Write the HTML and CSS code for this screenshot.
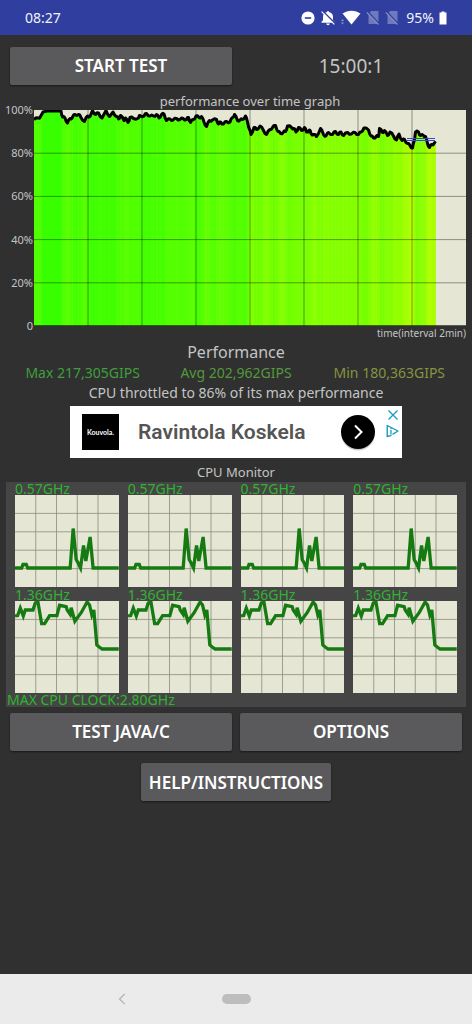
FILE: index.html
```html
<!DOCTYPE html>
<html lang="en">
<head>
<meta charset="utf-8">
<meta name="viewport" content="width=device-width, initial-scale=1">
<title>CPU Throttling Test</title>
<link rel="stylesheet" href="styles.css">
</head>
<body>
<header class="status">
  <span class="clock">08:27</span>
  <div class="status-icons">
    <svg width="14" height="14" viewBox="0 0 14 14"><circle cx="7" cy="7" r="6.6" fill="#fff"/><path d="M3.8 7h6.4" stroke="#303f9f" stroke-width="1.6"/></svg>
    <svg width="16" height="16" viewBox="0 0 16 16"><path d="M1.500 12.800V11.700l1.500-1.500V6.800C3 4.300 4.700 2.800 6.600 2.300 6.700.8 9.300.8 9.400 2.300 11.300 2.800 13 4.300 13 6.800v3.400l1.500 1.500v1.100zM6.300 13.500h3.400a1.700 1.700 0 0 1-3.400 0z" fill="#fff"/><path d="M2.700 1 15.300 13.600" stroke="#303f9f" stroke-width="1.500"/><path d="M1.600 1.700 14.300 14.400" stroke="#fff" stroke-width="1.200"/></svg>
    <svg width="20" height="15" viewBox="0 0 20 15"><path d="M1.500 3.600C6.500-.3 14.500-.3 19.500 3.600L10.500 14.500z" fill="#fff"/><path d="M0 11l1.500-2L3 11zM0 12.500l1.500 2 1.500-2z" fill="#8c95cb"/></svg>
    <svg width="14" height="15" viewBox="0 0 14 15"><path d="M5 1h7.500v13H2.500V4z" fill="#6f79bc"/><path d="M1.600 1.600 13.300 14" stroke="#303f9f" stroke-width="1.500"/><path d="M.8 2.300 12.400 14.500" stroke="#8790c8" stroke-width="1.100"/></svg>
    <svg width="14" height="15" viewBox="0 0 14 15"><path d="M5 1h7.500v13H2.500V4z" fill="#6f79bc"/><path d="M1.600 1.600 13.300 14" stroke="#303f9f" stroke-width="1.500"/><path d="M.8 2.300 12.400 14.500" stroke="#8790c8" stroke-width="1.100"/></svg>
    <span class="battery">95%</span>
    <svg width="8" height="14" viewBox="0 0 8 14"><path d="M2.500 1.500V.5h3v1H7.500v12H.5v-12z" fill="#fff"/></svg>
  </div>
</header>

<main class="app">
  <div class="row row-top">
    <button class="btn" type="button">START TEST</button>
    <div class="timer">15:00:1</div>
  </div>

  <section class="graph">
    <h2 class="graph-title">performance over time graph</h2>
    <div class="axis"><span>100%</span><span>80%</span><span>60%</span><span>40%</span><span>20%</span><span>0</span></div>
    <svg class="plot" id="perf" viewBox="0 0 432 216" preserveAspectRatio="none" role="img" aria-label="Performance over time"></svg>
    <p class="graph-x">time(interval 2min)</p>
  </section>

  <section class="summary">
    <h2 class="summary-title">Performance</h2>
    <div class="stats">
      <span class="max">Max 217,305GIPS</span>
      <span class="avg">Avg 202,962GIPS</span>
      <span class="min">Min 180,363GIPS</span>
    </div>
    <p class="note">CPU throttled to 86% of its max performance</p>
  </section>

  <aside class="ad">
    <a class="ad-link" href="#">
      <span class="ad-logo">Kouvola.</span>
      <span class="ad-text">Ravintola Koskela</span>
      <svg class="ad-go" width="36" height="38" viewBox="0 0 36 38"><circle cx="18" cy="20.500" r="17" fill="#ccc"/><circle cx="18" cy="19" r="17" fill="#000"/><path d="M15 12.500l6.500 6.500-6.500 6.500" fill="none" stroke="#fff" stroke-width="2"/></svg>
    </a>
    <div class="ad-tools">
      <button class="ad-btn" type="button" aria-label="Close ad"><svg width="12" height="12" viewBox="0 0 12 12"><path d="M1.500 1.500l9 9M10.500 1.500l-9 9" stroke="#1a9cc4" stroke-width="1.300"/></svg></button>
      <button class="ad-btn" type="button" aria-label="Ad choices"><svg width="13" height="14" viewBox="0 0 13 14"><path d="M5.500 11.300 1.200 12.500V1.500L12 7l-5.500 3.300" fill="none" stroke="#1a9cc4" stroke-width="1.400" stroke-linejoin="round"/><path d="M5 6v4.500M5 3.800v1.300" stroke="#1a9cc4" stroke-width="1.300"/></svg></button>
    </div>
  </aside>

  <section class="monitor">
    <h2 class="monitor-title">CPU Monitor</h2>
    <div class="panel">
      <div class="cores" id="cores"></div>
      <p class="max-clock">MAX CPU CLOCK:2.80GHz</p>
    </div>
  </section>

  <div class="row row-mid">
    <button class="btn" type="button">TEST JAVA/C</button>
    <button class="btn" type="button">OPTIONS</button>
  </div>
  <div class="row-help"><button class="btn btn-help" type="button">HELP/INSTRUCTIONS</button></div>
</main>

<nav class="navbar">
  <button class="nav-btn nav-back" type="button" aria-label="Back"><svg width="8" height="12" viewBox="0 0 8 12"><path d="M6.700 1 1.500 6l5.200 5" fill="none" stroke="#b5b5b5" stroke-width="1.300"/></svg></button>
  <button class="nav-btn nav-home" type="button" aria-label="Home"></button>
</nav>
<script src="charts.js"></script>
</body>
</html>
```

FILE: styles.css
```css
* { box-sizing: border-box; }
body {
  margin: 0;
  min-height: 100vh;
  display: flex;
  flex-direction: column;
  background: #303030;
  color: #c4c4c4;
  font-family: "Noto Sans", "Open Sans", sans-serif;
  font-size: 14px;
}
h2, p { margin: 0; font-weight: 400; }
button { font-family: inherit; border: 0; padding: 0; cursor: pointer; }
svg { display: block; }

.status {
  height: 35px;
  padding: 0 25px;
  display: flex;
  align-items: center;
  justify-content: space-between;
  background: #303f9f;
  color: #f2f3fa;
}
.clock { font-size: 14px; }
.status-icons { display: flex; align-items: center; gap: 5px; }
.battery { font-size: 14px; padding-left: 2px; }

.app { flex: 1; padding: 12px 6px 0; }
.row { display: grid; grid-template-columns: 1fr 1fr; gap: 8px; padding: 0 4px; align-items: center; }
.btn {
  height: 38px;
  border-radius: 2px;
  background: #5a5a5c;
  color: #fff;
  font-size: 17px;
  font-weight: 600;
  box-shadow: 0 1px 2px rgba(0, 0, 0, .5);
}
.row-top .btn, .row-mid .btn { padding-bottom: 1px; }
.timer { text-align: center; font-size: 19px; line-height: 26px; }

.graph {
  margin-top: 7px;
  display: grid;
  grid-template-columns: 28px 1fr;
}
.graph-title { grid-column: 2; text-align: center; font-size: 13px; line-height: 18px; }
.axis {
  margin: -6px 0;
  display: flex;
  flex-direction: column;
  justify-content: space-between;
  align-items: flex-end;
  padding-right: 1px;
  font-size: 11px;
  line-height: 12px;
}
.plot { width: 100%; height: 216px; background: #e6e6d4; }
.graph-x { grid-column: 2; text-align: right; font-size: 10px; line-height: 15px; }

.summary { text-align: center; }
.summary-title { font-size: 16px; line-height: 22px; }
.stats { display: grid; grid-template-columns: repeat(3, 1fr); line-height: 20px; }
.max { color: #3f9f3c; }
.avg { color: #55983c; }
.min { color: #849440; }
.note { line-height: 20px; }

.ad {
  width: 332px;
  max-width: 100%;
  height: 52px;
  margin: 3px auto 0;
  display: flex;
  background: #fff;
}
.ad-link {
  flex: 1;
  display: flex;
  align-items: center;
  padding-left: 12px;
  text-decoration: none;
}
.ad-logo {
  width: 37px;
  height: 36px;
  background: #000;
  color: #fff;
  font: 700 7px/36px Lato, sans-serif;
  text-align: center;
}
.ad-text {
  flex: 1;
  padding-left: 19px;
  color: #555;
  font: 600 21px/28px Roboto, sans-serif;
}
.ad-tools { width: 26px; padding: 3px 3px 0 0; display: flex; flex-direction: column; align-items: flex-end; gap: 3px; }
.ad-btn { background: none; }

.monitor-title { margin-top: 5px; text-align: center; font-size: 13px; line-height: 19px; }
.panel { background: #454545; color: #2fb42f; }
.cores { display: grid; grid-template-columns: repeat(4, 1fr); gap: 1px 9px; padding: 0 9px; }
.core-label { font-size: 14px; line-height: 14px; height: 13px; }
.core-plot { width: 100%; height: 92px; background: #e6e6d4; }
.max-clock { font-size: 14px; line-height: 14px; padding-left: 1px; }

.row-mid { margin-top: 6px; }
.row-help { margin-top: 12px; text-align: center; }
.btn-help { padding: 0 8px; }

.navbar {
  height: 50px;
  display: grid;
  grid-template-columns: 1fr 1fr 1fr 1fr;
  align-items: center;
  justify-items: center;
  background: #ebebeb;
}
.nav-btn { background: none; }
.nav-back { grid-column: 2; grid-row: 1; justify-self: start; }
.nav-home { grid-column: 2 / 4; grid-row: 1; width: 29px; height: 10px; border-radius: 5px; background: #bdbdbd; }
```

FILE: charts.js
```js
// Performance samples: x along the time axis, y as depth below 100%.
const perf = [
  [0,9.5],[4.5,8],[6.5,6.5],[9,2],[13,1],[27,1],[28.5,7],[31,8],[33.5,13],[36,8.5],[38.3,7.5],[41,4.5],[44.5,4.5],[47,7.5],
  [50.5,11.5],[53.5,6],[56,6.5],[58.5,.5],[61.5,4.5],[64.5,3],[68,8],[72,.5],[75.5,6.5],[79,2],[82.5,6.5],[84.5,9],[86.5,5.5],
  [90,10.5],[91.5,8],[94,12.5],[96,7.5],[99.5,8.5],[104.5,8],[106,5.5],[110,6],[112.5,3.5],[116,6],[119.5,6],[122.5,4.5],
  [125,8],[127.5,4.5],[130,4],[132.5,10.5],[136,9],[139,10],[142.5,8.5],[146,9.5],[149,8.5],[152.5,9.5],[154.5,7.5],[156.5,12.5],
  [159.5,9.5],[162,6],[165,7.5],[167.5,6.5],[170,12],[172.5,16.5],[175.5,10.5],[178.5,10],[182.5,9.5],[184.5,14],[186.5,12],
  [189.5,14],[192.5,11.5],[196,12],[198.5,7.5],[200.5,4.5],[203.5,10.5],[206,10],[208.5,9.5],[211.5,6],[213.5,12],[215.5,19.5],
  [217,24.5],[220,17.5],[222.5,19.5],[226,16],[229.5,20.5],[232.5,24.5],[236,19.5],[238.5,17.5],[241.5,15.5],[244,21.5],
  [246.5,23.5],[249.5,22],[251.5,21.5],[253.5,16],[257.5,17.5],[260,18.5],[262,22],[264.5,17.5],[267.5,20.5],[270.5,17.5],
  [272.5,22],[275.5,20],[277,23.5],[279.5,24.5],[282.5,26.5],[286.5,18.5],[289.5,24.5],[292,26],[294.5,22.5],[298.5,24.5],
  [301.5,21.5],[304.5,24.5],[307,22],[309.5,25.5],[313.5,22.5],[317.5,24],[321,22.5],[324.5,24.5],[327,22],[330,18],[334.5,20],
  [337,26],[339.5,28],[342.5,26],[344.5,26.5],[345.5,18.5],[348.5,22.5],[350.5,20.5],[353.5,25.5],[356,22],[359.5,26],
  [362.5,30],[365,24],[368,30.5],[370.5,29.5],[373.5,33.5],[376,35.5],[378.5,38],[380,31.5],[381.5,22],[384.5,22],[386.5,25.5],
  [389.5,25.5],[391.5,26.5],[393.5,33.5],[395.5,37.5],[398,34.5],[400,33.5],[401.5,33.5]
];
const idle = "0,73 6.7,73 8,69.5 11.3,69.5 12.7,73 55.3,73 58.3,33.5 61.3,64.5 63.3,68 65.7,73 68.7,50.5 71,66 75.3,42 78.3,73 104,73";
const busy = "0,15 2.7,14.5 5.3,7 8.3,15 10.3,9 18,9 20.3,2 23,1 26.7,22.7 29.7,22.7 34.7,14.7 42,14.7 44.7,4.3 51.3,5.7 52.3,9 55.3,13.3 56.3,6.7 60,20.3 66.3,11.7 72.3,1 74.7,4 77,14 79,9 82,44 84.7,46.3 87.3,48 104,48";

function gridLines(w, h, stepX, stepY) {
  let d = "";
  for (let x = stepX; x < w - 1; x += stepX) d += `M${x.toFixed(1)} 0V${h}`;
  for (let y = stepY; y < h - 1; y += stepY) d += `M0 ${y.toFixed(1)}H${w}`;
  return d;
}

// Each slice is tinted from green to yellow as performance drops.
let svg = "";
for (let i = 0; i < perf.length - 1; i++) {
  const [x0, y0] = perf[i], [x1, y1] = perf[i + 1];
  const red = Math.round(51 + (y0 + y1) / 2 * 3.5);
  svg += `<path d="M${x0} ${y0}L${x1} ${y1}H${x1 + .4}V216H${x0}z" fill="rgb(${red},255,0)"/>`;
}
svg += `<path d="${gridLines(432, 216, 54, 43.2)}" stroke="#000" stroke-opacity=".38" fill="none"/>`;
svg += `<path d="M0 215.5H432" stroke="#000" stroke-opacity=".6"/>`;
const line = [];
perf.forEach(([x, y], i) => {
  line.push(`${x},${y}`);
  const n = perf[i + 1];
  if (n && n[1] > 2) line.push(`${(x + n[0]) / 2},${(y + n[1]) / 2 + (i % 2 ? 1 : -1)}`);
});
svg += `<polyline points="${line.join(" ")}" fill="none" stroke="#000" stroke-width="3" stroke-linejoin="round"/>`;
svg += `<path d="M373 28.500H401M373 30.500H401" stroke="#3a46d8" stroke-width="1.100"/>`;
document.getElementById("perf").innerHTML = svg;

const core = (label, pts) => `<div class="core"><div class="core-label">${label}</div>
<svg class="core-plot" viewBox="0 0 104 92" preserveAspectRatio="none"><path d="${gridLines(104, 92, 20.8, 18.4)}" stroke="#8b8b7e" stroke-width=".8" fill="none"/>
<polyline points="${pts}" fill="none" stroke="#167a12" stroke-width="3.3"/></svg></div>`;
document.getElementById("cores").innerHTML = core("0.57GHz", idle).repeat(4) + core("1.36GHz", busy).repeat(4);
```
